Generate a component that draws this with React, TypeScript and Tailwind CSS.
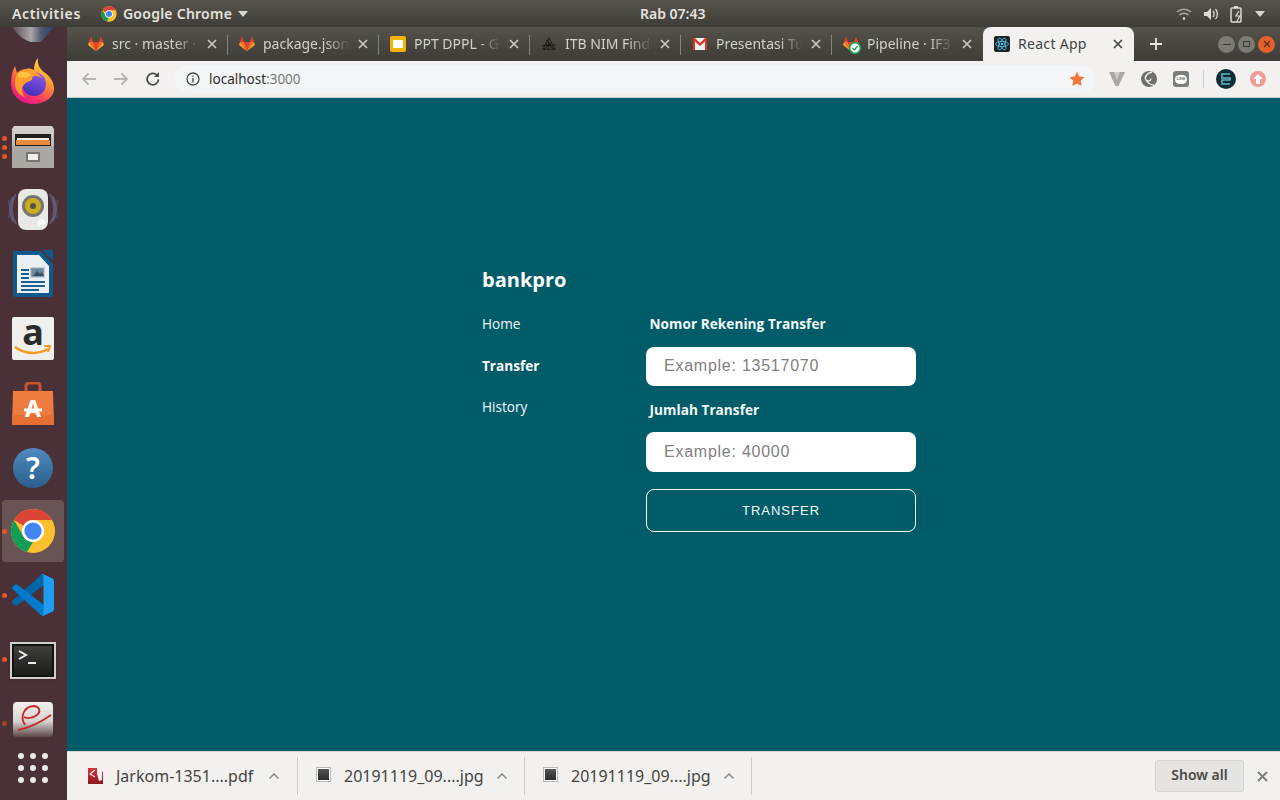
import React from "react";

const ui = { fontFamily: '"Noto Sans", "Open Sans", sans-serif' };
const web = { fontFamily: '"Open Sans", sans-serif' };
const arial = { fontFamily: '"Liberation Sans", Arial, sans-serif' };

function GitlabIcon({ size = 16 }: { size?: number }) {
  return (
    <svg width={size} height={size} viewBox="0 0 16 16" className="shrink-0">
      <path d="M8 15.3 11 6H5z" fill="#e24329" />
      <path d="M8 15.3 5 6H1z" fill="#fc6d26" />
      <path d="M1 6 .2 8.6c-.1.3 0 .6.2.7L8 15.3z" fill="#fca326" />
      <path d="M1 6h4L3.3 .9c-.1-.3-.5-.3-.6 0z" fill="#e24329" />
      <path d="M8 15.3 11 6h4z" fill="#fc6d26" />
      <path d="M15 6l.8 2.6c.1.3 0 .6-.2.7L8 15.3z" fill="#fca326" />
      <path d="M15 6h-4l1.7-5.1c.1-.3.5-.3.6 0z" fill="#e24329" />
    </svg>
  );
}

function ChromeIcon({ size = 16 }: { size?: number }) {
  return (
    <svg width={size} height={size} viewBox="0 0 48 48" className="shrink-0">
      <circle cx="24" cy="24" r="23" fill="#fbc02d" />
      <path d="M24 1a23 23 0 0 1 19.9 11.5H24a11.5 11.5 0 0 0-10 5.8L4.1 12.5A23 23 0 0 1 24 1z" fill="#db4437" />
      <path d="M4.1 12.5 14 29.8a11.5 11.5 0 0 0 10 5.7l-6.5 10.6A23 23 0 0 1 4.1 12.5z" fill="#0f9d58" />
      <circle cx="24" cy="24" r="11.5" fill="#fff" />
      <circle cx="24" cy="24" r="9" fill="#4285f4" />
    </svg>
  );
}

function CloseX({ className = "" }: { className?: string }) {
  return (
    <svg width="10" height="10" viewBox="0 0 10 10" className={className}>
      <path d="M1 1l8 8M9 1l-8 8" stroke="currentColor" strokeWidth="1.6" fill="none" />
    </svg>
  );
}

function Tab({ icon, title, separator = true }: { icon: React.ReactNode; title: string; separator?: boolean }) {
  return (
    <div className="w-[151px] h-[34px] flex items-center pl-[11px] shrink-0 relative" style={ui}>
      <div className="w-[16px] h-[16px] flex items-center justify-center shrink-0">{icon}</div>
      <div className="ml-[8px] -mt-[2px] w-[87px] overflow-hidden whitespace-nowrap text-[14px] text-[#d3d0ca] [mask-image:linear-gradient(to_right,black_72%,transparent)]">
        {title}
      </div>
      <CloseX className="ml-[8px] text-[#cfccc6]" />
      {separator && <div className="absolute right-0 top-[8px] w-px h-[20px] bg-[#86837c]" />}
    </div>
  );
}

function DockItem({ children, dots = 0, active = false, dotColor = "bg-[#e95420]" }: { children: React.ReactNode; dots?: number; active?: boolean; dotColor?: string }) {
  return (
    <div className="h-[64px] w-[66px] shrink-0 flex items-center justify-center relative">
      {active && <div className="absolute left-[2px] top-[2px] w-[62px] h-[62px] rounded-[4px] bg-[#6a5355]" />}
      {dots > 0 && (
        <div className="absolute left-[2px] top-[1px] h-full flex flex-col justify-center gap-[4px]">
          {Array.from({ length: dots }).map((_, i) => (
            <div key={i} className={`w-[5px] h-[5px] rounded-full ${dotColor}`} />
          ))}
        </div>
      )}
      <div className="relative flex items-center justify-center">{children}</div>
    </div>
  );
}

function Firefox() {
  return (
    <svg width="46" height="46" viewBox="0 0 46 46" className="-mt-[2px]">
      <defs>
        <linearGradient id="ffb" x1="0.85" y1="0.05" x2="0.35" y2="1">
          <stop offset="0" stopColor="#ffde4a" />
          <stop offset="0.4" stopColor="#ff9a2e" />
          <stop offset="0.75" stopColor="#ff3f5f" />
          <stop offset="1" stopColor="#e3158a" />
        </linearGradient>
        <linearGradient id="ffg" x1="0.7" y1="0" x2="0.3" y2="1">
          <stop offset="0" stopColor="#8f5ae8" />
          <stop offset="1" stopColor="#3f2fb8" />
        </linearGradient>
      </defs>
      <path d="M28 0c-1 7 2 11 7 15 6 4 9 10 9 16 0 8-9 15-21 15C10 46 1 37 1 25c0-6 1-11 4-17l2 7c3-3 6-4 9-4 3-1 6 0 8 1 0-4 1-9 4-12z" fill="url(#ffb)" />
      <circle cx="24" cy="26" r="12" fill="url(#ffg)" />
      <path d="M8 15c5-4 12-4 17-1 3 1 5 3 7 6-3-2-7-3-10-1 1 2 0 3-2 4-4 1-8 4-8 9 0 3 1 5 3 7C8 37 4 30 5 24c0-4 1-7 3-9z" fill="#ff9d2a" />
      <path d="M8 15c5-2 10-1 14 2l-6 3c-3-1-6 0-8-1z" fill="#ffc53d" />
    </svg>
  );
}

function Files() {
  return (
    <svg width="42" height="43" viewBox="0 0 42 43" className="mt-[2px]">
      <defs>
        <linearGradient id="fl" x1="0" y1="0" x2="0" y2="1">
          <stop offset="0" stopColor="#d5d4d1" />
          <stop offset="1" stopColor="#9c9b98" />
        </linearGradient>
      </defs>
      <path d="M2 0h38l2 3v39H0V3z" fill="url(#fl)" />
      <rect x="3" y="8" width="36" height="13" fill="#22201e" />
      <rect x="5" y="12" width="32" height="2" fill="#f2efe8" />
      <rect x="4" y="14" width="34" height="5" fill="#e98a3c" />
      <rect x="0" y="20" width="42" height="22" fill="#a9a8a4" />
      <rect x="14" y="26" width="14" height="10" rx="1" fill="#77766f" />
      <rect x="16" y="28" width="10" height="6" fill="#f0f0ee" />
    </svg>
  );
}

function Speaker() {
  return (
    <svg width="50" height="44" viewBox="0 0 50 44" className="-mt-[1px]">
      <path d="M5 9a26 26 0 0 0 0 24M45 9a26 26 0 0 1 0 24" stroke="#5f5b75" strokeWidth="2" fill="none" />
      <path d="M8 6a30 30 0 0 0 0 30M42 6a30 30 0 0 1 0 30" stroke="#6b6683" strokeWidth="2" fill="none" opacity="0.7" />
      <path d="M1 12a22 22 0 0 0 0 18M49 12a22 22 0 0 1 0 18" stroke="#574a5a" strokeWidth="2" fill="none" />
      <rect x="10" y="1" width="30" height="41" rx="8" fill="#e8e8e4" />
      <circle cx="25" cy="18" r="11" fill="#76746e" />
      <circle cx="25" cy="18" r="8" fill="#c9ad1f" />
      <circle cx="25" cy="18" r="3" fill="#55534d" />
      <circle cx="33" cy="35" r="4" fill="#f7f7f5" />
    </svg>
  );
}

function Writer() {
  return (
    <svg width="40" height="48" viewBox="0 0 40 48">
      <path d="M2 1h26l12 13v30a3 3 0 0 1-3 3H3a3 3 0 0 1-3-3V3a2 2 0 0 1 2-2z" fill="#0f5a8a" />
      <path d="M29 0h11v11z" fill="#0f5a8a" />
      <path d="M4 5h22l10 11v27H4z" fill="#eaf0f4" />
      <rect x="8" y="19" width="8" height="2" fill="#18608f" />
      <rect x="8" y="23" width="8" height="2" fill="#18608f" />
      <rect x="8" y="27" width="8" height="2" fill="#18608f" />
      <rect x="18" y="18" width="13" height="9" fill="#6b8ba3" stroke="#9db1bf" />
      <path d="M20 26l4-5 3 3 2-2 2 4z" fill="#3a4f5f" />
      <rect x="8" y="31" width="24" height="2" fill="#18608f" />
      <rect x="8" y="35" width="24" height="2" fill="#18608f" />
      <rect x="8" y="39" width="18" height="2" fill="#18608f" />
    </svg>
  );
}

function Amazon() {
  return (
    <div className="w-[42px] h-[43px] rounded-[2px] bg-[#efefed] relative flex items-start justify-center">
      <span className="text-[36px] leading-[36px] -mt-[3px] font-bold text-[#2b2b2b]" style={ui}>a</span>
      <svg width="38" height="12" viewBox="0 0 38 12" className="absolute left-[2px] bottom-[3px]">
        <path d="M1 2c9 7 23 8 33 2" stroke="#f79a1e" strokeWidth="2.6" fill="none" />
        <path d="M30 1l6 0-2 6" stroke="#f79a1e" strokeWidth="2" fill="none" />
      </svg>
    </div>
  );
}

function Store() {
  return (
    <div className="relative w-[42px] h-[43px] mt-[2px]">
      <svg width="42" height="43" viewBox="0 0 42 43" className="absolute left-0 top-0">
        <path d="M14 10V4a3 3 0 0 1 3-3h8a3 3 0 0 1 3 3v6" stroke="#c9562a" strokeWidth="3" fill="none" />
        <path d="M1 9h40l1 34H0z" fill="#ee7b3f" />
        <path d="M0 33h42v10H0z" fill="#e56f35" />
        <path d="M12 28h18" stroke="#fff" strokeWidth="3" />
      </svg>
      <span className="absolute left-0 right-0 top-[12px] text-center text-[23px] leading-[28px] font-bold text-white" style={ui}>A</span>
    </div>
  );
}

function Help() {
  return (
    <div className="mt-[4px] w-[40px] h-[40px] rounded-full bg-gradient-to-b from-[#4f8ac0] to-[#2a5f8c] flex items-center justify-center">
      <span className="text-[30px] leading-none font-semibold text-white" style={ui}>?</span>
    </div>
  );
}

function VSCode() {
  return (
    <svg width="42" height="42" viewBox="0 0 100 100" className="mt-[2px]">
      <path d="M96.5 10.8 75.900.9c-2.400-1.200-5.200-.7-7.100 1.200L1.400 63.600c-1.800 1.600-1.800 4.500 0 6.100l5.500 5c1.500 1.300 3.700 1.400 5.300.2L93.400 13.300c2.700-2.100 6.600-.1 6.600 3.300v-.2c0-2.400-1.400-4.700-3.500-5.700z" fill="#0065a9" />
      <path d="M96.500 89.200 75.900 99.100c-2.400 1.100-5.200.6-7.100-1.200L1.400 36.400c-1.800-1.600-1.800-4.500 0-6.100l5.500-5c1.500-1.300 3.700-1.400 5.300-.2l81.200 61.600c2.700 2.100 6.600.1 6.600-3.300v.2c0 2.400-1.400 4.700-3.500 5.700z" fill="#007acc" />
      <path d="M75.900 99.100c-2.400 1.200-5.200.7-7.100-1.200 2.300 2.300 6.200.7 6.200-2.600V4.700c0-3.300-3.900-4.900-6.200-2.600 1.900-1.900 4.700-2.400 7.100-1.200l20.600 9.900c2.100 1 3.500 3.200 3.500 5.600v67.200c0 2.400-1.400 4.600-3.500 5.600z" fill="#1f9cf0" />
    </svg>
  );
}

function Terminal() {
  return (
    <div className="mt-[5px] w-[46px] h-[37px] bg-[#cfcfcc] p-[2px] shadow-sm">
      <div className="w-full h-full bg-gradient-to-b from-[#3f3f3d] to-[#1d1d1c] border-2 border-[#111] relative overflow-hidden">
        <svg width="22" height="16" viewBox="0 0 22 16" className="absolute left-[4px] top-[4px]">
          <path d="M1 1l7 4-7 4" stroke="#eee" strokeWidth="2" fill="none" />
          <path d="M10 13h8" stroke="#eee" strokeWidth="2" />
        </svg>
      </div>
    </div>
  );
}

function Evince() {
  return (
    <svg width="40" height="35" viewBox="0 0 40 35" className="-mt-[5px]">
      <defs>
        <linearGradient id="ev" x1="0" y1="0" x2="0" y2="1">
          <stop offset="0" stopColor="#f2f1ef" />
          <stop offset="0.55" stopColor="#d8d3d1" />
          <stop offset="1" stopColor="#5e464a" />
        </linearGradient>
      </defs>
      <rect width="40" height="35" rx="4" fill="url(#ev)" />
      <path d="M12 23C6 14 12 4 21 4c6 1 7 6 3 9-4 3-9 4-13 2M5 28c11-2 23-8 33-15" stroke="#c42a2a" strokeWidth="1.800" fill="none" />
    </svg>
  );
}

function Dock() {
  return (
    <div className="w-[67px] shrink-0 bg-[#4a3138] flex flex-col overflow-hidden">
      <div className="h-[23px] shrink-0 w-[66px] flex justify-center overflow-hidden">
        <svg width="44" height="16" viewBox="0 0 44 16">
          <defs>
            <linearGradient id="top" x1="0" y1="0" x2="1" y2="0">
              <stop offset="0" stopColor="#5a4b55" />
              <stop offset="0.45" stopColor="#a9a6a8" />
              <stop offset="0.7" stopColor="#52566f" />
              <stop offset="1" stopColor="#2f3f70" />
            </linearGradient>
          </defs>
          <path d="M1 0h42L30 15H20C12 13 6 7 1 0z" fill="url(#top)" />
        </svg>
      </div>
      <DockItem><Firefox /></DockItem>
      <DockItem dots={3}><Files /></DockItem>
      <DockItem><Speaker /></DockItem>
      <DockItem><Writer /></DockItem>
      <DockItem><Amazon /></DockItem>
      <DockItem><Store /></DockItem>
      <DockItem><Help /></DockItem>
      <DockItem dots={1} active><div className="mt-[2px]"><ChromeIcon size={46} /></div></DockItem>
      <DockItem dots={1}><VSCode /></DockItem>
      <DockItem dots={1}><Terminal /></DockItem>
      <DockItem dots={1} dotColor="bg-[#a8421f]"><Evince /></DockItem>
      <div className="grid grid-cols-3 gap-x-[6px] gap-y-[6px] w-[30px] ml-[18px] -mt-[1px]">
        {Array.from({ length: 9 }).map((_, i) => (
          <div key={i} className="w-[6px] h-[6px] rounded-full bg-[#ebe9e8]" />
        ))}
      </div>
    </div>
  );
}

function TopBar() {
  return (
    <div className="h-[27px] shrink-0 bg-gradient-to-b from-[#57544c] to-[#3f3d38] flex items-center text-[14px] font-semibold text-[#e4e2de] relative" style={ui}>
      <span className="ml-[12px] tracking-[0.65px]">Activities</span>
      <div className="ml-[20px] flex items-center">
        <ChromeIcon size={16} />
        <span className="ml-[6px] tracking-[0.25px]">Google Chrome</span>
        <svg width="10" height="6" viewBox="0 0 10 6" className="ml-[6px]"><path d="M0 0h10L5 6z" fill="#d8d6d2" /></svg>
      </div>
      <div className="absolute left-[640px] top-0 h-[27px] flex items-center text-[14px]">Rab 07:43</div>
      <div className="ml-auto mr-[15px] flex items-center gap-[11px] text-[#d8d6d2]">
        <svg width="16" height="14" viewBox="0 0 16 14" fill="none" stroke="#a9a7a2" strokeWidth="1.500">
          <path d="M1 5a10 10 0 0 1 14 0M3.500 8a6.500 6.500 0 0 1 9 0" />
          <circle cx="8" cy="11.500" r="1.200" fill="#e4e2de" stroke="none" />
        </svg>
        <svg width="16" height="14" viewBox="0 0 16 14" fill="none">
          <path d="M1 5h3l4-4v12l-4-4H1z" fill="#dedcd8" />
          <path d="M10 4c1.500 1.500 1.500 4.500 0 6M12.500 2c2.500 2.500 2.500 7.500 0 10" stroke="#dedcd8" strokeWidth="1.300" />
        </svg>
        <svg width="14" height="18" viewBox="0 0 14 18" fill="none">
          <rect x="1" y="3" width="10" height="14" rx="1" stroke="#dedcd8" strokeWidth="1.500" />
          <rect x="4" y="1" width="4" height="2" fill="#dedcd8" />
          <path d="M9 6l-3 5h4l-3 5" stroke="#dedcd8" strokeWidth="1.200" />
        </svg>
        <svg width="10" height="6" viewBox="0 0 10 6"><path d="M0 0h10L5 6z" fill="#d8d6d2" /></svg>
      </div>
    </div>
  );
}

function TabStrip() {
  return (
    <div className="h-[34px] shrink-0 bg-gradient-to-b from-[#55524a] to-[#3e3c37] flex items-center pl-[10px]">
      <Tab icon={<GitlabIcon />} title="src · master · IF3" />
      <Tab icon={<GitlabIcon />} title="package.json · m" />
      <Tab
        icon={
          <div className="w-[16px] h-[16px] rounded-[2px] bg-[#f4b400] flex items-center justify-center">
            <div className="w-[10px] h-[8px] bg-white" />
          </div>
        }
        title="PPT DPPL - Goog"
      />
      <Tab
        icon={
          <svg width="18" height="16" viewBox="0 0 18 16" fill="none" stroke="#141414" strokeWidth="0.900">
            <path d="M9 1 2 14h14zM9 1l-1 13M5 7l10 7M12 6 3 14M1 10l16-1M6 4l7 7" />
          </svg>
        }
        title="ITB NIM Finder"
      />
      <Tab
        icon={
          <svg width="16" height="14" viewBox="0 0 16 14">
            <rect x="1" y="1" width="14" height="12" fill="#f1f0ee" />
            <path d="M1 1h2l5 5 5-5h2v12h-2V4.500L8 9 3 4.500V13H1z" fill="#d8382c" />
          </svg>
        }
        title="Presentasi Tugas"
      />
      <Tab
        icon={
          <div className="relative w-[16px] h-[16px]">
            <GitlabIcon />
            <svg width="12" height="12" viewBox="0 0 12 12" className="absolute right-[-2px] bottom-[-2px]">
              <circle cx="6" cy="6" r="5.300" fill="#fff" stroke="#1aaa55" strokeWidth="1.500" />
              <path d="M3.500 6l2 2 3-4" stroke="#1aaa55" strokeWidth="1.300" fill="none" />
            </svg>
          </div>
        }
        title="Pipeline · IF3"
        separator={false}
      />
      <div className="w-[151px] h-[34px] bg-[#f2f1f0] rounded-t-[8px] flex items-center pl-[11px] shrink-0" style={ui}>
        <div className="w-[16px] h-[16px] bg-[#20232a] rounded-[2px] flex items-center justify-center shrink-0">
          <svg width="14" height="14" viewBox="-12 -12 24 24" fill="none" stroke="#61dafb" strokeWidth="1.200">
            <ellipse rx="11" ry="4.500" />
            <ellipse rx="11" ry="4.500" transform="rotate(60)" />
            <ellipse rx="11" ry="4.500" transform="rotate(120)" />
            <circle r="2" fill="#61dafb" stroke="none" />
          </svg>
        </div>
        <div className="ml-[8px] -mt-[2px] w-[87px] whitespace-nowrap text-[14px] tracking-[0.3px] text-[#45433f]">React App</div>
        <CloseX className="ml-[8px] text-[#45433f]" />
      </div>
      <svg width="14" height="14" viewBox="0 0 14 14" className="ml-[15px]">
        <path d="M7 1v12M1 7h12" stroke="#e8e6e2" strokeWidth="1.800" />
      </svg>
      <div className="ml-auto mr-[5px] flex items-center gap-[3px]">
        <div className="w-[17px] h-[17px] rounded-full bg-[#7d7a73] flex items-center justify-center">
          <div className="w-[8px] h-px bg-[#3d3b37]" />
        </div>
        <div className="w-[17px] h-[17px] rounded-full bg-[#7d7a73] flex items-center justify-center">
          <div className="w-[7px] h-[6px] border border-[#3d3b37]" />
        </div>
        <div className="w-[17px] h-[17px] rounded-full bg-[#e2602a] flex items-center justify-center">
          <CloseX className="scale-75 text-[#5a2a15]" />
        </div>
      </div>
    </div>
  );
}

function Toolbar() {
  return (
    <div className="h-[37px] shrink-0 bg-[#f2f1f0] border-b border-[#c9c8c6] flex items-center">
      <svg width="16" height="14" viewBox="0 0 16 14" className="ml-[14px]" fill="none" stroke="#b5b4b2" strokeWidth="1.800">
        <path d="M15 7H2M7.500 1.500 2 7l5.500 5.500" />
      </svg>
      <svg width="16" height="14" viewBox="0 0 16 14" className="ml-[16px]" fill="none" stroke="#b5b4b2" strokeWidth="1.800">
        <path d="M1 7h13M8.500 1.500 14 7l-5.500 5.500" />
      </svg>
      <svg width="16" height="16" viewBox="0 0 16 16" className="ml-[16px]" fill="none" stroke="#4a4a48" strokeWidth="1.800">
        <path d="M13.500 8.500A5.700 5.700 0 1 1 11.800 4" />
        <path d="M14 1v5H9z" fill="#4a4a48" stroke="none" />
      </svg>
      <div className="ml-[14px] w-[920px] h-[28px] rounded-full bg-[#f4f5f6] flex items-center pl-[10px] pr-[10px]" style={ui}>
        <svg width="14" height="14" viewBox="0 0 14 14" fill="none" className="ml-px">
          <circle cx="7" cy="7" r="6" stroke="#4a4a48" strokeWidth="1.300" />
          <path d="M7 6v4.500M7 3.500v1.300" stroke="#4a4a48" strokeWidth="1.400" />
        </svg>
        <span className="ml-[9px] text-[13.500px] text-[#2f2f2d]">localhost<span className="text-[#777]">:3000</span></span>
        <svg width="16" height="16" viewBox="0 0 24 24" className="ml-auto" fill="#f4743b">
          <path d="M12 1l3.400 7.300 7.900 1-5.800 5.400 1.500 7.900L12 18.700 5 22.600l1.500-7.900L.7 9.300l7.900-1z" />
        </svg>
      </div>
      <svg width="16" height="16" viewBox="0 0 16 16" className="ml-[14px]">
        <path d="M0 1h6l2 6 2-6h6L9.500 15h-3z" fill="#a9a8a6" />
        <path d="M5 1h6L8 9z" fill="#d0cfcd" />
      </svg>
      <svg width="16" height="16" viewBox="0 0 16 16" className="ml-[16px]">
        <circle cx="8" cy="8" r="8" fill="#6f6f6d" />
        <path d="M11 1C6 2 3 6 5 9c1.500 2 5 1 5-1.500M5 9c2 3 5 5 8 5" stroke="#f2f1f0" strokeWidth="1.300" fill="none" />
      </svg>
      <div className="ml-[16px] w-[16px] h-[16px] rounded-[3px] bg-[#7d7d7b] flex items-center justify-center">
        <div className="w-[12px] h-[9px] rounded-full bg-white flex items-center justify-center">
          <span className="text-[4px] leading-none font-bold text-[#7d7d7b]" style={arial}>LINE</span>
        </div>
      </div>
      <div className="ml-[14px] w-px h-[18px] bg-[#cfcecc]" />
      <div className="ml-[12px] w-[20px] h-[20px] rounded-full bg-[#0e2a33] flex items-center justify-center">
        <svg width="10" height="12" viewBox="0 0 10 12" fill="none" stroke="#5fb8c9" strokeWidth="1.500">
          <path d="M9 1H1v4h8v2H1v4h8" />
        </svg>
      </div>
      <div className="ml-[14px] w-[16px] h-[16px] rounded-full bg-[#f29a96] flex items-center justify-center">
        <svg width="10" height="10" viewBox="0 0 10 10"><path d="M5 0l5 5H7v5H3V5H0z" fill="#fff" /></svg>
      </div>
    </div>
  );
}

function Field({ label, placeholder, height, labelClass, inputClass = "" }: { label: string; placeholder: string; height: string; labelClass: string; inputClass?: string }) {
  return (
    <div className="flex flex-col">
      <label className={`pl-[3.500px] text-[13.600px] leading-[20px] font-bold text-[#f4f9fa] tracking-[0.05px] ${labelClass}`} style={web}>{label}</label>
      <input
        readOnly
        placeholder={placeholder}
        className={`w-[270px] ${height} ${inputClass} rounded-[8px] bg-white pl-[18px] text-[16px] tracking-[0.75px] placeholder:text-[#808080] outline-none`}
        style={arial}
      />
    </div>
  );
}

function Page() {
  return (
    <div className="flex-1 bg-[#005c69] pl-[415px] pt-[168px]" style={web}>
      <div className="text-[20px] leading-[28px] font-bold text-white">bankpro</div>
      <div className="flex mt-[21px]">
        <div className="w-[164px] flex flex-col text-[13.600px] leading-[20px] text-[#f4f9fa]">
          <span className="mt-[-1px]">Home</span>
          <span className="mt-[22px] font-bold text-white">Transfer</span>
          <span className="mt-[21px]">History</span>
        </div>
        <div className="flex flex-col mt-[-1px]">
          <Field label="Nomor Rekening Transfer" placeholder="Example: 13517070" height="h-[39px]" labelClass="mb-[13px]" inputClass="pb-[2px]" />
          <div className="h-[14px]" />
          <Field label="Jumlah Transfer" placeholder="Example: 40000" height="h-[40px]" labelClass="mb-[12px]" />
          <button className="mt-[17px] w-[270px] h-[43px] rounded-[8px] border border-white text-[13px] tracking-[1px] text-[#f4f9fa]" style={arial}>
            TRANSFER
          </button>
        </div>
      </div>
    </div>
  );
}

function Download({ icon, name, width, pad }: { icon: React.ReactNode; name: string; width: string; pad: string }) {
  return (
    <div className={`h-[38px] ${width} shrink-0 flex items-center border-r border-[#cfcecc]`}>
      <div className={`${pad} w-[16px] flex justify-center shrink-0`}>{icon}</div>
      <span className="ml-[13px] w-[153px] text-[16px] text-[#45433f] whitespace-nowrap" style={ui}>{name}</span>
      <svg width="10" height="6" viewBox="0 0 10 6" fill="none" stroke="#8c8b89" strokeWidth="1.500">
        <path d="M0.500 5.500 5 1l4.500 4.500" />
      </svg>
    </div>
  );
}

const JpgIcon = (
  <div className="w-[15px] h-[15px] -mt-[4px] border border-[#b9b8b6] bg-white p-[1px]">
    <div className="w-full h-full bg-gradient-to-b from-[#555] to-[#2b2b2b]" />
  </div>
);

function DownloadBar() {
  return (
    <div className="h-[49px] shrink-0 bg-[#f2f1f0] border-t border-[#d8d7d5] flex items-center">
      <Download
        width="w-[231px]"
        pad="ml-[20px]"
        icon={
          <svg width="15" height="17" viewBox="0 0 15 17" className="-mt-[2px]">
            <defs>
              <linearGradient id="pdf" x1="0" y1="0" x2="0" y2="1">
                <stop offset="0" stopColor="#d8323a" />
                <stop offset="1" stopColor="#8d1a20" />
              </linearGradient>
            </defs>
            <path d="M0 1h10l5 4v12H0z" fill="url(#pdf)" />
            <path d="M9 0h2l3 4v9l-3 1-2-7z" fill="#f4eeee" />
            <path d="M7 3 2 7l5 3" stroke="#f4eeee" strokeWidth="1.200" fill="none" />
          </svg>
        }
        name="Jarkom-1351....pdf"
      />
      <Download width="w-[227px]" pad="ml-[17px]" icon={JpgIcon} name="20191119_09....jpg" />
      <Download width="w-[227px]" pad="ml-[17px]" icon={JpgIcon} name="20191119_09....jpg" />
      <button className="ml-auto w-[89px] h-[32px] pb-[3px] rounded-[3px] bg-[#e5e4e2] border border-[#d5d4d2] text-[14px] font-semibold text-[#4a4845]" style={ui}>
        Show all
      </button>
      <svg width="11" height="11" viewBox="0 0 11 11" className="ml-[13px] mr-[12px]" fill="none" stroke="#7d7c7a" strokeWidth="1.800">
        <path d="M1 1l9 9M10 1l-9 9" />
      </svg>
    </div>
  );
}

export default function App() {
  return (
    <div className="w-[1280px] h-[800px] flex flex-col overflow-hidden">
      <TopBar />
      <div className="flex-1 flex min-h-0">
        <Dock />
        <div className="flex-1 flex flex-col min-w-0">
          <TabStrip />
          <Toolbar />
          <Page />
          <DownloadBar />
        </div>
      </div>
    </div>
  );
}
